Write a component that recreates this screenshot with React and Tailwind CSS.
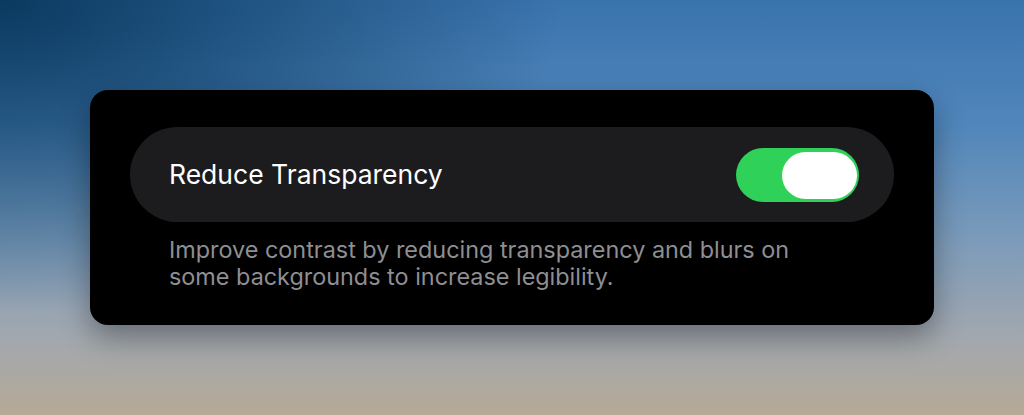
import { useState } from "react";

const Toggle = ({ on, onChange }) => (
  <button
    onClick={() => onChange(!on)}
    className={`relative w-[123px] h-[54px] rounded-full shrink-0 transition-colors ${
      on ? "bg-[#30d158]" : "bg-[#39393d]"
    }`}
  >
    <span
      className={`absolute top-[4px] h-[47px] w-[75px] rounded-full bg-white transition-all ${
        on ? "left-[46px]" : "left-[2px]"
      }`}
    />
  </button>
);

const App = () => {
  const [enabled, setEnabled] = useState(true);

  return (
    <div className="w-[1024px] h-[415px] overflow-hidden bg-[radial-gradient(ellipse_55%_75%_at_0%_0%,#0b3a60_0%,rgba(11,58,96,0)_100%),linear-gradient(180deg,#3a74ad_0%,#5086bb_30%,#7f9cb9_60%,#a3a8ae_82%,#b6a996_100%)] font-['Inter',sans-serif]">
      <div className="pt-[90px] pl-[90px]">
        {/* card */}
        <div className="w-[844px] h-[235px] bg-black rounded-[18px] shadow-[0_12px_30px_rgba(0,0,0,0.35)] pt-[37px] px-[40px]">
          {/* setting row */}
          <div className="h-[95px] rounded-full bg-[#1c1c1e] flex items-center justify-between pl-[39px] pr-[35px]">
            <span className="text-white text-[26.5px] leading-none">Reduce Transparency</span>
            <Toggle on={enabled} onChange={setEnabled} />
          </div>

          <p className="mt-[14px] pl-[39px] text-[#8e8e93] text-[23.4px] leading-[27px]">
            Improve contrast by reducing transparency and blurs on
            <br />
            some backgrounds to increase legibility.
          </p>
        </div>
      </div>
    </div>
  );
};

export default App;
